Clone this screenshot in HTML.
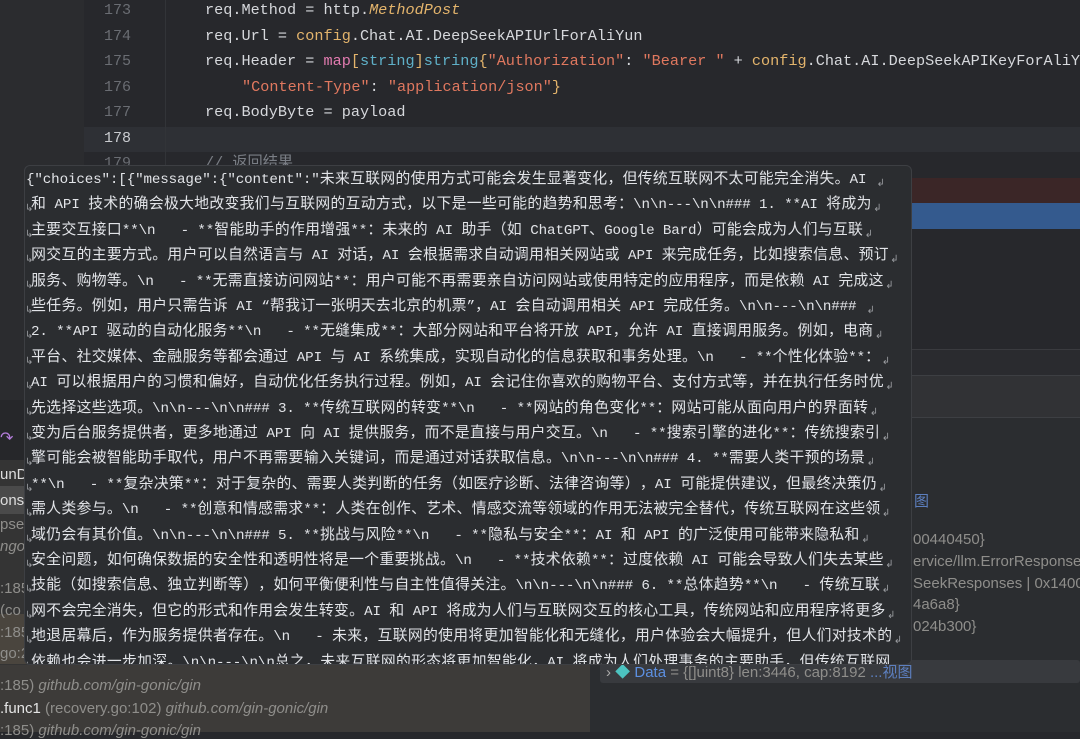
<!DOCTYPE html>
<html><head><meta charset="utf-8">
<style>
*{margin:0;padding:0;box-sizing:border-box}
body{width:1080px;height:732px;overflow:hidden;background:#27282c;position:relative;font-family:"Liberation Mono","Noto Sans CJK SC",monospace}
.abs{position:absolute}
.code{position:absolute;left:0;font-size:15.2px;color:#d6d8dc;white-space:pre;line-height:25.5px}
.ln{position:absolute;left:104px;width:40px;font-size:15px;color:#6a6d73;line-height:25.5px;text-align:left}
.k{color:#e27bb0}.t{color:#5fb0c8}.s{color:#e0785f}.i{color:#e3b46c;font-style:italic}.y{color:#e3b46c}
#pop{position:absolute;left:24px;top:165px;width:888px;height:500px;background:#2b2d30;border:1px solid #3d3f43;border-radius:6px;overflow:hidden}
#pop .l{position:absolute;white-space:pre;font-size:14.2px;color:#e2e4e8;height:25.4px;line-height:25.4px;font-family:"Liberation Mono","Noto Sans CJK SC",monospace}
#pop .l i{display:inline-block;font-style:normal;text-align:center;overflow:visible}
#pop .l i.c{font-size:14.8px}
#pop .wg{position:absolute;font-size:10px;color:#9a9ca0;line-height:25.4px;font-family:"DejaVu Sans",sans-serif}
.fr{position:absolute;font-family:"Liberation Sans","Noto Sans CJK SC",sans-serif;font-size:15px;color:#8f8e8b;white-space:pre}
.it{font-style:italic}
</style></head><body>
<div class="abs" style="left:0;top:0;width:84px;height:400px;background:#2b2c2f"></div>
<div class="abs" style="left:0;top:400px;width:84px;height:60px;background:#26272a"></div>
<div class="abs" style="left:0;top:460px;width:84px;height:205px;background:#343434"></div>
<div class="abs" style="left:0;top:486px;width:84px;height:28px;background:#4a4a4a"></div>
<div class="abs" style="left:0;top:614px;width:84px;height:50px;background:#4a453e"></div>
<div class="abs" style="left:0;top:665px;width:590px;height:67px;background:#3d3b39"></div>
<div class="abs" style="left:590px;top:375px;width:490px;height:357px;background:#2b2d30"></div>
<div class="abs" style="left:590px;top:375px;width:490px;height:43px;background:#313235;border-top:1px solid #3d3f43;border-bottom:1px solid #3d3f43"></div>
<div class="abs" style="left:590px;top:349px;width:490px;height:26px;background:#2a2b2f;border-top:1px solid #3a3b3f"></div>
<div class="abs" style="left:84px;top:127px;width:996px;height:25px;background:#2e3035"></div>
<div class="abs" style="left:165px;top:0;width:1px;height:165px;background:#323438"></div>
<div class="abs" style="left:900px;top:178px;width:180px;height:25px;background:#3b2627"></div>
<div class="abs" style="left:900px;top:203px;width:180px;height:26px;background:#345a8e"></div>
<div class="abs" style="left:600px;top:660px;width:480px;height:23px;background:#383a3e;border-radius:3px"></div>

<div class="ln" style="top:-2px">173</div>
<div class="ln" style="top:23.5px">174</div>
<div class="ln" style="top:49px">175</div>
<div class="ln" style="top:74.5px">176</div>
<div class="ln" style="top:100px">177</div>
<div class="ln" style="top:126px;color:#c9cbcf">178</div>
<div class="ln" style="top:151px">179</div>

<div class="code" style="left:205px;top:-2px">req.Method = http.<span class="i">MethodPost</span></div>
<div class="code" style="left:205px;top:23.5px">req.Url = <span class="y">config</span>.Chat.AI.DeepSeekAPIUrlForAliYun</div>
<div class="code" style="left:205px;top:49px">req.Header = <span class="k">map</span><span class="y">[</span><span class="t">string</span><span class="y">]</span><span class="t">string</span><span class="y">{</span><span class="s">"Authorization"</span>: <span class="s">"Bearer "</span> + <span class="y">config</span>.Chat.AI.DeepSeekAPIKeyForAliYun</div>
<div class="code" style="left:242px;top:74.5px"><span class="s">"Content-Type"</span>: <span class="s">"application/json"</span><span class="y">}</span></div>
<div class="code" style="left:205px;top:100px">req.BodyByte = payload</div>
<div class="code" style="left:205px;top:151px;color:#7a7e85">// 返回结果</div>

<div class="abs" style="left:0;top:428px;color:#b57edc;font-size:16px">↷</div>
<div class="fr" style="left:0;top:466px;color:#ddd">unD</div>
<div class="fr" style="left:0;top:492px;color:#ddd">ons</div>
<div class="fr" style="left:0;top:516px">pse</div>
<div class="fr it" style="left:0;top:538px">ngo</div>
<div class="fr" style="left:0;top:580px">:185</div>
<div class="fr" style="left:0;top:602px">(co</div>
<div class="fr" style="left:0;top:624px">:185</div>
<div class="fr" style="left:0;top:645px">go:21) <span class="it">cmd/internal/common/middleware</span></div>
<div class="fr" style="left:0;top:677px">:185) <span class="it">github.com/gin-gonic/gin</span></div>
<div class="fr" style="left:0;top:700px"><span style="color:#e4e4e4">.func1</span> (recovery.go:102) <span class="it">github.com/gin-gonic/gin</span></div>
<div class="fr" style="left:0;top:722px">:185) <span class="it">github.com/gin-gonic/gin</span></div>

<div class="fr" style="left:914px;top:490px;color:#5c7fbf">图</div>
<div class="fr" style="left:913px;top:531px">00440450}</div>
<div class="fr" style="left:913px;top:553px">ervice/llm.ErrorResponse</div>
<div class="fr" style="left:913px;top:575px">SeekResponses | 0x1400</div>
<div class="fr" style="left:913px;top:596px">4a6a8}</div>
<div class="fr" style="left:913px;top:618px">024b300}</div>
<div class="fr" style="left:606px;top:661px"><span style="color:#aaa">›</span> <span style="color:#4cc3c0">◆</span> <span style="color:#5c8fe0">Data</span> = {[]uint8} len:3446, cap:8192 <span style="color:#5c7fbf">...视图</span></div>

<div id="pop">
<div class="l">{"choices":[{"message":{"content":"未来互联网的使用方式可能会发生显著变化，但传统互联网不太可能完全消失。AI </div>
<div class="l">和 API 技术的确会极大地改变我们与互联网的互动方式，以下是一些可能的趋势和思考：\n\n---\n\n### 1. **AI 将成为</div>
<div class="l">主要交互接口**\n   - **智能助手的作用增强**：未来的 AI 助手（如 ChatGPT、Google Bard）可能会成为人们与互联</div>
<div class="l">网交互的主要方式。用户可以自然语言与 AI 对话，AI 会根据需求自动调用相关网站或 API 来完成任务，比如搜索信息、预订</div>
<div class="l">服务、购物等。\n   - **无需直接访问网站**：用户可能不再需要亲自访问网站或使用特定的应用程序，而是依赖 AI 完成这</div>
<div class="l">些任务。例如，用户只需告诉 AI “帮我订一张明天去北京的机票”，AI 会自动调用相关 API 完成任务。\n\n---\n\n### </div>
<div class="l">2. **API 驱动的自动化服务**\n   - **无缝集成**：大部分网站和平台将开放 API，允许 AI 直接调用服务。例如，电商</div>
<div class="l">平台、社交媒体、金融服务等都会通过 API 与 AI 系统集成，实现自动化的信息获取和事务处理。\n   - **个性化体验**：</div>
<div class="l">AI 可以根据用户的习惯和偏好，自动优化任务执行过程。例如，AI 会记住你喜欢的购物平台、支付方式等，并在执行任务时优</div>
<div class="l">先选择这些选项。\n\n---\n\n### 3. **传统互联网的转变**\n   - **网站的角色变化**：网站可能从面向用户的界面转</div>
<div class="l">变为后台服务提供者，更多地通过 API 向 AI 提供服务，而不是直接与用户交互。\n   - **搜索引擎的进化**：传统搜索引</div>
<div class="l">擎可能会被智能助手取代，用户不再需要输入关键词，而是通过对话获取信息。\n\n---\n\n### 4. **需要人类干预的场景</div>
<div class="l">**\n   - **复杂决策**：对于复杂的、需要人类判断的任务（如医疗诊断、法律咨询等），AI 可能提供建议，但最终决策仍</div>
<div class="l">需人类参与。\n   - **创意和情感需求**：人类在创作、艺术、情感交流等领域的作用无法被完全替代，传统互联网在这些领</div>
<div class="l">域仍会有其价值。\n\n---\n\n### 5. **挑战与风险**\n   - **隐私与安全**：AI 和 API 的广泛使用可能带来隐私和</div>
<div class="l">安全问题，如何确保数据的安全性和透明性将是一个重要挑战。\n   - **技术依赖**：过度依赖 AI 可能会导致人们失去某些</div>
<div class="l">技能（如搜索信息、独立判断等），如何平衡便利性与自主性值得关注。\n\n---\n\n### 6. **总体趋势**\n   - 传统互联</div>
<div class="l">网不会完全消失，但它的形式和作用会发生转变。AI 和 API 将成为人们与互联网交互的核心工具，传统网站和应用程序将更多</div>
<div class="l">地退居幕后，作为服务提供者存在。\n   - 未来，互联网的使用将更加智能化和无缝化，用户体验会大幅提升，但人们对技术的</div>
<div class="l" data-last="1">依赖也会进一步加深。\n\n---\n\n总之，未来互联网的形态将更加智能化，AI 将成为人们处理事务的主要助手，但传统互联网</div>
</div>
<script>
(function(){
var pop=document.getElementById('pop');
var ls=pop.querySelectorAll('.l');
var narrow='“”‘’';
for(var n=0;n<ls.length;n++){
  var d=ls[n], t=d.textContent, h='', x=0;
  for(var k=0;k<t.length;k++){
    var c=t[k], wide=c.charCodeAt(0)>0x2000 && narrow.indexOf(c)<0, w=wide?15.15:8.4;
    x+=w;
    var e=c==='&'?'&amp;':c==='<'?'&lt;':c===' '?'&nbsp;':c;
    h+='<i'+(wide?' class="c"':'')+' style="width:'+w+'px">'+e+'</i>';
  }
  d.innerHTML=h;
  var top=n*25.4+2;
  var left=(n===0)?1:6;
  d.style.top=top+'px';d.style.left=left+'px';
  if(n>0){var g=document.createElement('div');g.className='wg';g.style.left='0px';g.style.top=(top+3)+'px';g.textContent='↳';pop.appendChild(g);}
  if(!d.getAttribute('data-last')){var g2=document.createElement('div');g2.className='wg';g2.style.left=(left+x+1)+'px';g2.style.top=(top+3)+'px';g2.textContent='↲';pop.appendChild(g2);}
}
})();
</script>
</body></html>
